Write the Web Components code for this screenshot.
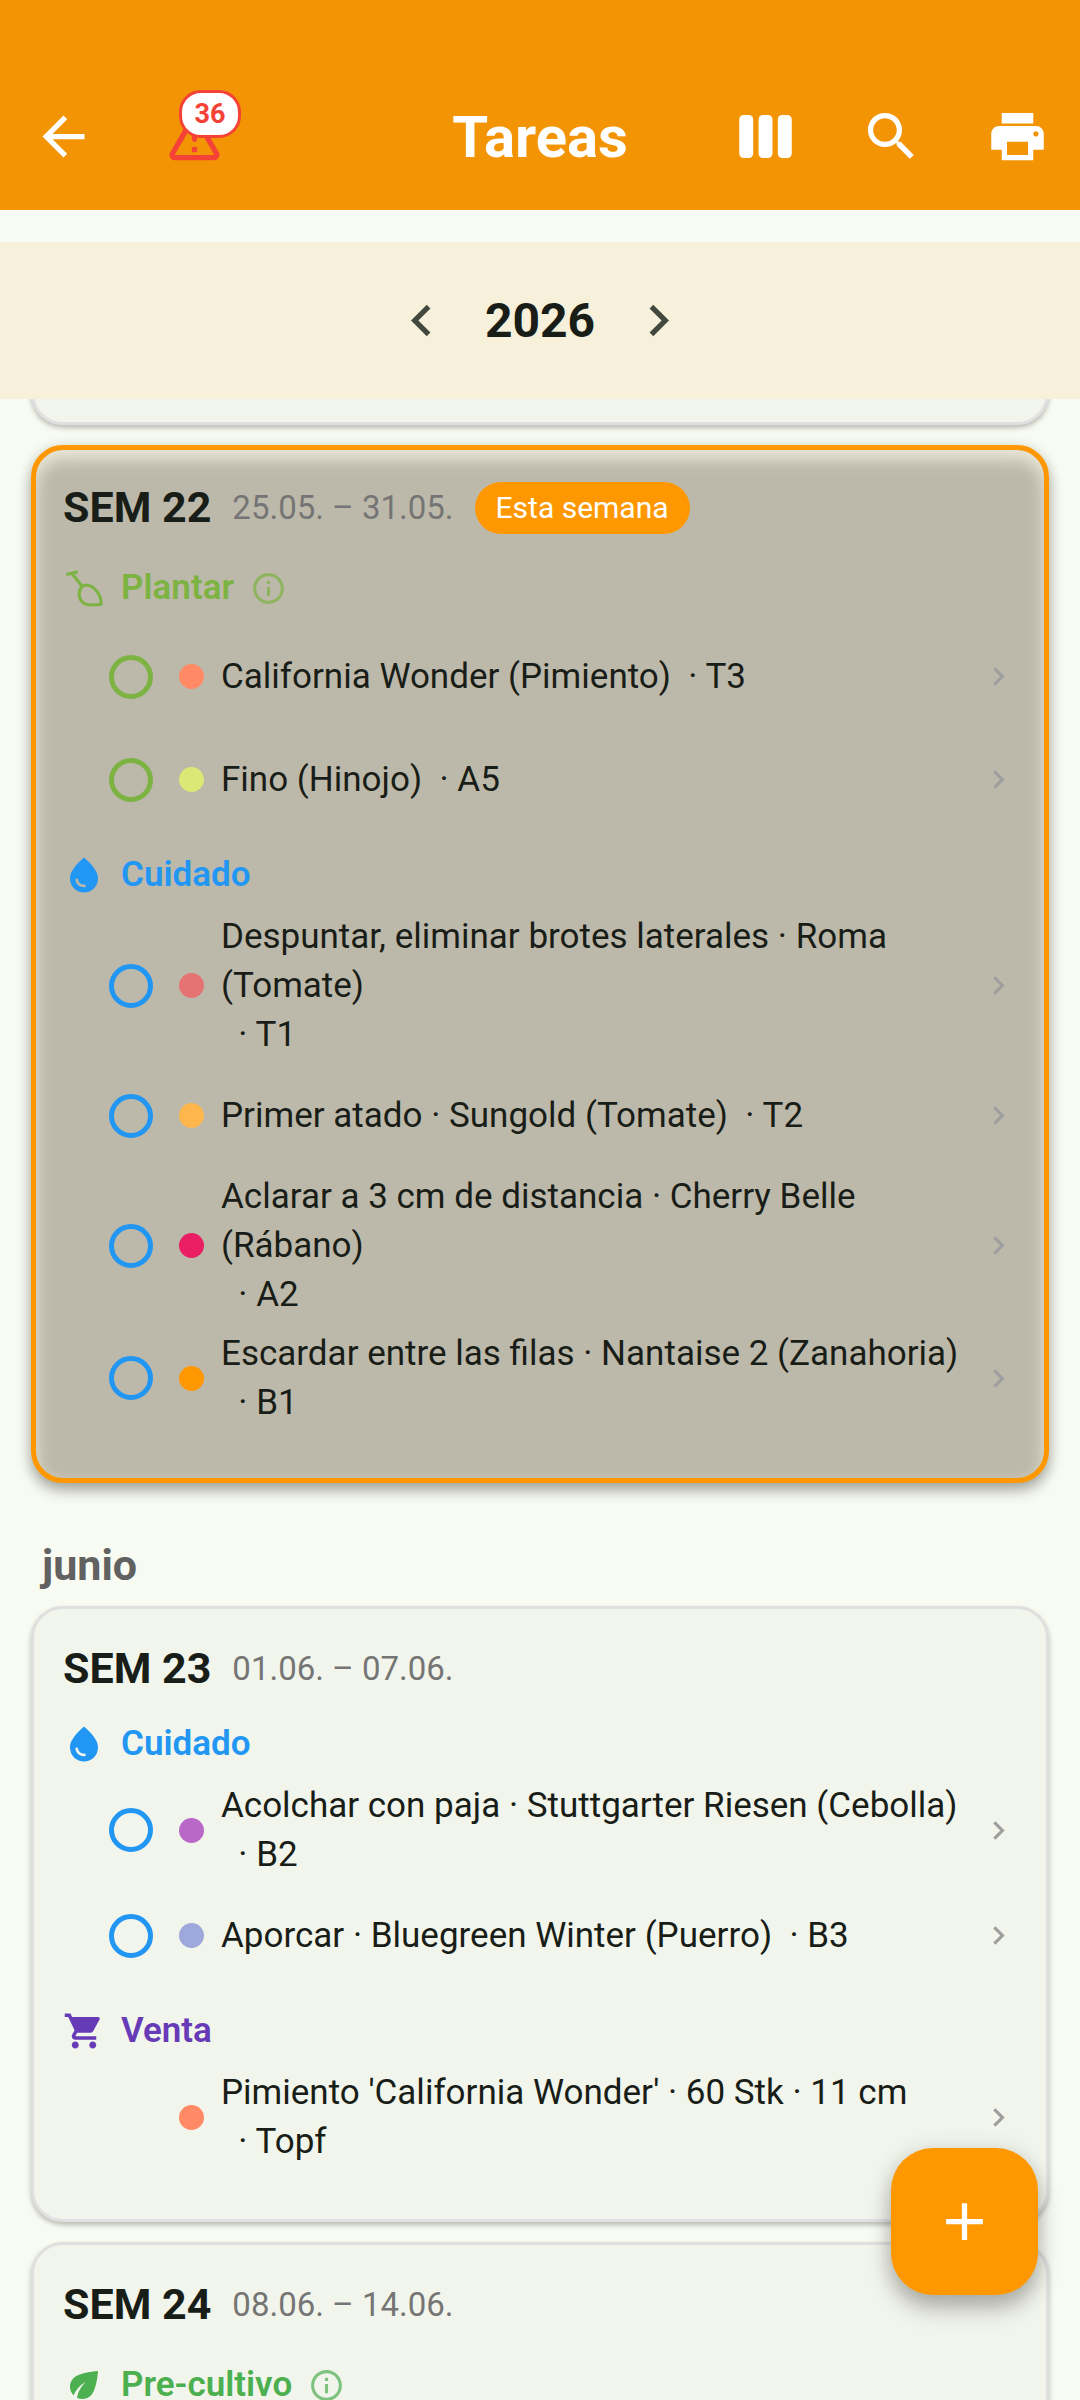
<!DOCTYPE html>
<html lang="es">
<head>
<meta charset="utf-8">
<meta name="viewport" content="width=device-width, initial-scale=1">
<title>Tareas</title>
<style>
    html, body {
        margin: 0;
        height: 100%;
    }
    body {
        display: flex;
        flex-direction: column;
        background: #f8fbf1;
        color: #191d17;
        font-family: Roboto, "Noto Sans", sans-serif;
        overflow: hidden;
    }
    main {
        flex: 1;
        min-height: 0;
        overflow: hidden;
        padding: 0 31px;
    }
    /* The list is scrolled: only the end of this card shows under the year bar */
    .scrolled {
        margin-top: -94px;
    }
</style>
</head>
<body>
    <app-bar heading="Tareas" alerts="36"></app-bar>
    <year-nav>2026</year-nav>

    <main>
        <week-card class="scrolled"></week-card>

        <week-card week="SEM 22" dates="25.05. – 31.05." current="Esta semana">
            <task-group label="Plantar" icon="shovel" color="#7cb342" info>
                <task-item dot="#ff8a65" place="T3">California Wonder (Pimiento)</task-item>
                <task-item dot="#dce775" place="A5">Fino (Hinojo)</task-item>
            </task-group>
            <task-group label="Cuidado" icon="drop" color="#2196f3">
                <task-item dot="#e57373" place="T1">Despuntar, eliminar brotes laterales · Roma (Tomate)</task-item>
                <task-item dot="#ffb74d" place="T2">Primer atado · Sungold (Tomate)</task-item>
                <task-item dot="#e91e63" place="A2">Aclarar a 3 cm de distancia · Cherry Belle (Rábano)</task-item>
                <task-item dot="#ff9800" place="B1">Escardar entre las filas · Nantaise 2 (Zanahoria)</task-item>
            </task-group>
        </week-card>

        <month-title>junio</month-title>

        <week-card week="SEM 23" dates="01.06. – 07.06.">
            <task-group label="Cuidado" icon="drop" color="#2196f3">
                <task-item dot="#ba68c8" place="B2">Acolchar con paja · Stuttgarter Riesen (Cebolla)</task-item>
                <task-item dot="#9fa8da" place="B3">Aporcar · Bluegreen Winter (Puerro)</task-item>
            </task-group>
            <task-group label="Venta" icon="cart" color="#673ab7">
                <task-item dot="#ff8a65" place="Topf" readonly>Pimiento 'California Wonder' · 60 Stk · 11 cm</task-item>
            </task-group>
        </week-card>

        <week-card week="SEM 24" dates="08.06. – 14.06.">
            <task-group label="Pre-cultivo" icon="leaf" color="#4caf50" info></task-group>
        </week-card>
    </main>

    <add-button></add-button>

<script>
const icons = {
    back: '<path d="M20 11H7.83l5.59-5.59L12 4l-8 8 8 8 1.41-1.41L7.83 13H20z"/>',
    warning: '<path d="M12 5.99 19.53 19H4.47zM2.74 18c-.77 1.33.19 3 1.73 3h15.06c1.54 0 2.5-1.67 1.73-3L13.73 4.99c-.77-1.33-2.69-1.33-3.46 0zM11 11v2c0 .55.45 1 1 1s1-.45 1-1v-2c0-.55-.45-1-1-1s-1 .45-1 1m0 5h2v2h-2z"/>',
    columns: '<rect x="2" y="3.8" width="5.3" height="16.4" rx="1.7"/><rect x="9.35" y="3.8" width="5.3" height="16.4" rx="1.7"/><rect x="16.7" y="3.8" width="5.3" height="16.4" rx="1.7"/>',
    search: '<path d="M15.5 14h-.79l-.28-.27A6.47 6.47 0 0 0 16 9.5 6.5 6.5 0 1 0 9.5 16c1.61 0 3.09-.59 4.23-1.57l.27.28v.79l5 4.99L20.49 19zm-6 0C7.01 14 5 11.99 5 9.5S7.01 5 9.5 5 14 7.01 14 9.5 11.99 14 9.5 14"/>',
    print: '<path d="M19 8H5c-1.66 0-3 1.34-3 3v6h4v4h12v-4h4v-6c0-1.66-1.34-3-3-3m-3 11H8v-5h8zm3-7c-.55 0-1-.45-1-1s.45-1 1-1 1 .45 1 1-.45 1-1 1m-1-9H6v4h12z"/>',
    left: '<path d="M15.41 7.41 14 6l-6 6 6 6 1.41-1.41L10.83 12z"/>',
    right: '<path d="M10 6 8.59 7.41 13.17 12l-4.58 4.59L10 18l6-6z"/>',
    info: '<path d="M11 7h2v2h-2zm0 4h2v6h-2zm1-9C6.48 2 2 6.48 2 12s4.48 10 10 10 10-4.48 10-10S17.52 2 12 2m0 18c-4.41 0-8-3.59-8-8s3.59-8 8-8 8 3.59 8 8-3.59 8-8 8"/>',
    add: '<path d="M19 13h-6v6h-2v-6H5v-2h6V5h2v6h6z"/>',
    drop: '<path d="M12 2c-5.33 4.55-8 8.48-8 11.8 0 4.98 3.8 8.2 8 8.2s8-3.22 8-8.2c0-3.32-2.67-7.25-8-11.8M7.83 14c.37 0 .67.26.74.62.41 2.22 2.28 2.98 3.64 2.87.43-.02.79.32.79.75 0 .4-.32.73-.72.75-2.13.13-4.62-1.09-5.19-4.12-.08-.45.28-.87.74-.87"/>',
    cart: '<path d="M7 18c-1.1 0-1.99.9-1.99 2S5.9 22 7 22s2-.9 2-2-.9-2-2-2M1 2v2h2l3.6 7.59-1.35 2.45c-.16.28-.25.61-.25.96 0 1.1.9 2 2 2h12v-2H7.42c-.14 0-.25-.11-.25-.25l.03-.12.9-1.63h7.45c.75 0 1.41-.41 1.75-1.03l3.58-6.49A1.003 1.003 0 0 0 20 4H5.21l-.94-2zm16 16c-1.1 0-1.99.9-1.99 2s.89 2 1.99 2 2-.9 2-2-.9-2-2-2"/>',
    leaf: '<path d="M6.05 8.05c-2.73 2.73-2.73 7.15-.02 9.88 1.47-3.4 4.09-6.24 7.36-7.93-2.77 2.34-4.71 5.61-5.39 9.32 2.6 1.23 5.8.78 7.95-1.37C19.43 14.47 20 4 20 4S9.53 4.57 6.05 8.05"/>',
    shovel: '<g fill="none" stroke="currentColor" stroke-width="1.8" stroke-linejoin="round"><path d="M1.9 4.3 8.4 2.8M5.2 3.8l5.6 7M10.8 11.2c2-1.6 5.2-1 7.8 1.8 2.5 2.7 3.4 5 3.1 8.3-2.6.4-6 .6-8.6 0-4.4-1.8-4.8-7-2.3-10.1z"/></g>'
};

class MdIcon extends HTMLElement {
    constructor() {
        super();
        const shadow = this.attachShadow({ mode: 'open' });
        shadow.innerHTML = `
            <style>
                :host {
                    display: block;
                    flex: none;
                    width: var(--icon-size, 63px);
                    height: var(--icon-size, 63px);
                }
                svg {
                    display: block;
                    width: 100%;
                    height: 100%;
                    fill: currentColor;
                }
            </style>
            <svg viewBox="0 0 24 24" aria-hidden="true">${icons[this.getAttribute('name')]}</svg>
        `;
    }
}

class AppBar extends HTMLElement {
    constructor() {
        super();
        const shadow = this.attachShadow({ mode: 'open' });
        shadow.innerHTML = `
            <style>
                :host {
                    display: block;
                    background: #f29404;
                    color: #ffffff;
                    padding-top: 63px;
                }
                header {
                    display: grid;
                    grid-template-columns: 1fr auto 1fr;
                    align-items: center;
                    height: 147px;
                }
                div {
                    display: flex;
                }
                .actions {
                    justify-content: flex-end;
                }
                h1 {
                    margin: 0;
                    font-size: 58px;
                    line-height: 68px;
                    font-weight: 700;
                }
                button {
                    display: grid;
                    place-items: center;
                    width: 126px;
                    height: 126px;
                    padding: 0;
                    border: 0;
                    background: none;
                    color: inherit;
                    font: inherit;
                }
                .alerts {
                    position: relative;
                    width: 136px;
                    color: #f44336;
                }
                .badge {
                    position: absolute;
                    left: 53px;
                    top: 16px;
                    box-sizing: border-box;
                    width: 62px;
                    height: 48px;
                    border: 3px solid #f44336;
                    border-radius: 22px;
                    background: #ffffff;
                    font-size: 27px;
                    line-height: 42px;
                    font-weight: 700;
                    text-align: center;
                }
            </style>
            <header>
                <div>
                    <button aria-label="Atrás"><md-icon name="back"></md-icon></button>
                    <button class="alerts" aria-label="Avisos">
                        <md-icon name="warning"></md-icon>
                        <span class="badge">${this.getAttribute('alerts')}</span>
                    </button>
                </div>
                <h1>${this.getAttribute('heading')}</h1>
                <div class="actions">
                    <button aria-label="Vista"><md-icon name="columns"></md-icon></button>
                    <button aria-label="Buscar"><md-icon name="search"></md-icon></button>
                    <button aria-label="Imprimir"><md-icon name="print"></md-icon></button>
                </div>
            </header>
        `;
    }
}

class YearNav extends HTMLElement {
    constructor() {
        super();
        const shadow = this.attachShadow({ mode: 'open' });
        shadow.innerHTML = `
            <style>
                :host {
                    display: flex;
                    justify-content: center;
                    align-items: center;
                    margin-top: 32px;
                    height: 157px;
                    background: #f7f0da;
                    font-size: 48px;
                    line-height: 64px;
                    font-weight: 700;
                }
                button {
                    display: grid;
                    place-items: center;
                    width: 126px;
                    height: 126px;
                    padding: 0;
                    border: 0;
                    background: none;
                    color: #43483f;
                }
            </style>
            <button aria-label="Año anterior"><md-icon name="left"></md-icon></button>
            <slot></slot>
            <button aria-label="Año siguiente"><md-icon name="right"></md-icon></button>
        `;
    }
}

class WeekCard extends HTMLElement {
    constructor() {
        super();
        const current = this.getAttribute('current');
        const shadow = this.attachShadow({ mode: 'open' });
        shadow.innerHTML = `
            <style>
                :host {
                    display: block;
                    box-sizing: border-box;
                    min-height: 120px;
                    margin-bottom: 20px;
                    padding: 28px 29px 48px;
                    border: 3px solid #e0e0e0;
                    border-radius: 32px;
                    background: #f2f5eb;
                    box-shadow: 0 3px 5px rgba(0, 0, 0, 0.25);
                }
                :host([current]) {
                    padding: 26px 27px 46px;
                    border: 5px solid #ff9800;
                    background: #bdb9aa;
                    box-shadow: 0 8px 14px rgba(0, 0, 0, 0.28), 0 2px 14px rgba(0, 0, 0, 0.12),
                        inset 0 9px 16px #ebe9d9;
                }
                header {
                    display: flex;
                    align-items: center;
                    gap: 21px;
                    height: 63px;
                }
                h2 {
                    margin: 0;
                    font-size: 43px;
                    line-height: 63px;
                    font-weight: 700;
                }
                time {
                    color: #757575;
                    font-size: 33px;
                    line-height: 48px;
                }
                .pill {
                    padding: 0 21px;
                    border-radius: 26px;
                    background: #ff9800;
                    color: #ffffff;
                    font-size: 30px;
                    line-height: 52px;
                }
            </style>
            ${this.hasAttribute('week') ? `
            <header>
                <h2>${this.getAttribute('week')}</h2>
                <time>${this.getAttribute('dates')}</time>
                ${current ? `<span class="pill">${current}</span>` : ''}
            </header>` : ''}
            <slot></slot>
        `;
    }
}

class TaskGroup extends HTMLElement {
    constructor() {
        super();
        const shadow = this.attachShadow({ mode: 'open' });
        this.style.setProperty('--group-color', this.getAttribute('color'));
        shadow.innerHTML = `
            <style>
                :host {
                    display: block;
                    --icon-size: 42px;
                }
                header {
                    display: flex;
                    align-items: center;
                    gap: 16px;
                    min-height: 50px;
                    padding: 19px 0 7px;
                    color: var(--group-color);
                }
                :host([info]) header {
                    min-height: 60px;
                }
                h3 {
                    margin: 0;
                    font-size: 35px;
                    line-height: 50px;
                    font-weight: 600;
                }
                button {
                    --icon-size: 37px;
                    padding: 0;
                    border: 0;
                    background: none;
                    color: inherit;
                    opacity: 0.7;
                }
            </style>
            <header>
                <md-icon name="${this.getAttribute('icon')}"></md-icon>
                <h3>${this.getAttribute('label')}</h3>
                ${this.hasAttribute('info') ? '<button aria-label="Información"><md-icon name="info"></md-icon></button>' : ''}
            </header>
            <slot></slot>
        `;
    }
}

class TaskItem extends HTMLElement {
    constructor() {
        super();
        const shadow = this.attachShadow({ mode: 'open' });
        shadow.innerHTML = `
            <style>
                :host {
                    display: flex;
                    align-items: center;
                    box-sizing: border-box;
                    min-height: 103px;
                    padding: 5px 0 5px 46px;
                    font-size: 35px;
                    line-height: 49px;
                }
                label {
                    display: flex;
                    align-items: center;
                    flex: 1;
                    min-width: 0;
                }
                input, .blank {
                    flex: none;
                    width: 44px;
                    height: 44px;
                    margin: 0 26px 0 0;
                }
                input {
                    appearance: none;
                    box-sizing: border-box;
                    border: 5px solid var(--group-color);
                    border-radius: 50%;
                }
                .dot {
                    flex: none;
                    width: 25px;
                    height: 25px;
                    margin-right: 17px;
                    border-radius: 50%;
                    background: ${this.getAttribute('dot')};
                }
                .text {
                    display: flex;
                    flex-wrap: wrap;
                    flex: 1;
                    min-width: 0;
                }
                .place {
                    white-space: pre;
                }
                button {
                    --icon-size: 37px;
                    padding: 0;
                    border: 0;
                    background: none;
                    color: #9e9e9e;
                }
            </style>
            <label>
                ${this.hasAttribute('readonly') ? '<span class="blank"></span>' : '<input type="checkbox">'}
                <span class="dot"></span>
                <span class="text"><span><slot></slot></span><span class="place">  · ${this.getAttribute('place')}</span></span>
            </label>
            <button aria-label="Abrir"><md-icon name="right"></md-icon></button>
        `;
    }
}

class MonthTitle extends HTMLElement {
    constructor() {
        super();
        const shadow = this.attachShadow({ mode: 'open' });
        shadow.innerHTML = `
            <style>
                :host {
                    display: block;
                    padding: 37px 11px 16px;
                }
                h2 {
                    margin: 0;
                    color: #616161;
                    font-size: 43px;
                    line-height: 50px;
                    font-weight: 700;
                }
            </style>
            <h2><slot></slot></h2>
        `;
    }
}

class AddButton extends HTMLElement {
    constructor() {
        super();
        const shadow = this.attachShadow({ mode: 'open' });
        shadow.innerHTML = `
            <style>
                :host {
                    display: block;
                    position: fixed;
                    right: 42px;
                    bottom: 105px;
                }
                button {
                    display: grid;
                    place-items: center;
                    width: 147px;
                    height: 147px;
                    padding: 0;
                    border: 0;
                    border-radius: 42px;
                    background: #ff9800;
                    color: #ffffff;
                    box-shadow: 0 14px 22px rgba(0, 0, 0, 0.25), 0 2px 24px rgba(0, 0, 0, 0.12);
                }
            </style>
            <button aria-label="Añadir tarea"><md-icon name="add"></md-icon></button>
        `;
    }
}

customElements.define('md-icon', MdIcon);
customElements.define('app-bar', AppBar);
customElements.define('year-nav', YearNav);
customElements.define('week-card', WeekCard);
customElements.define('task-group', TaskGroup);
customElements.define('task-item', TaskItem);
customElements.define('month-title', MonthTitle);
customElements.define('add-button', AddButton);
</script>
</body>
</html>
